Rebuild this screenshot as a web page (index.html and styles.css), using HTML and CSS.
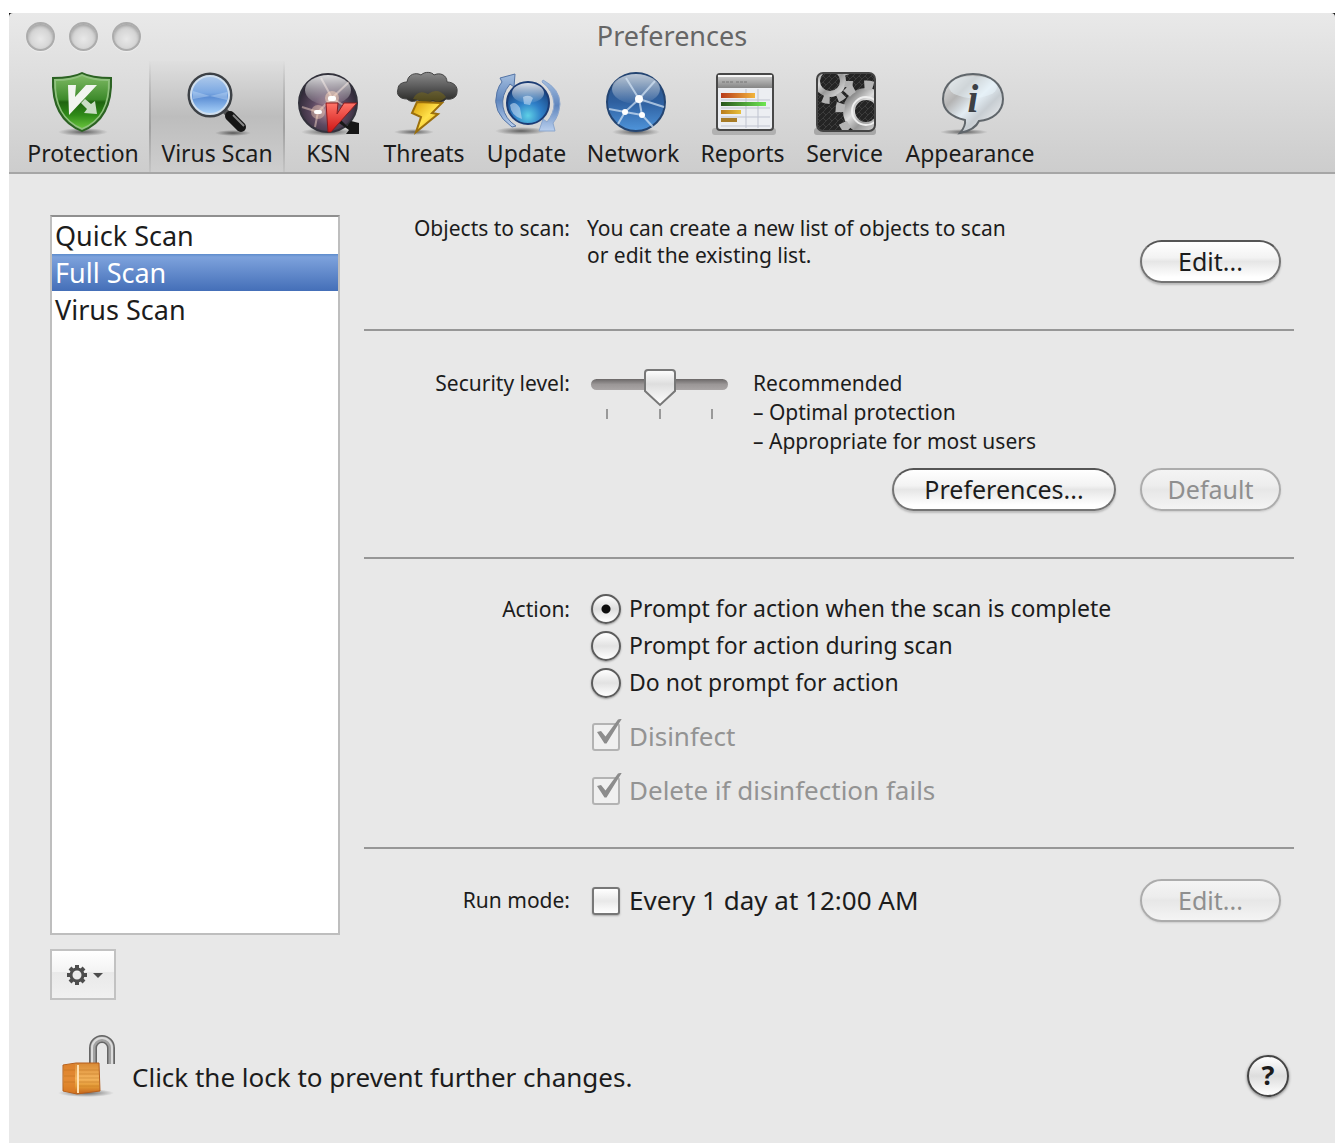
FILE: index.html
```html
<!DOCTYPE html>
<html lang="en">
<head>
<meta charset="utf-8">
<title>Preferences</title>
<link rel="stylesheet" href="styles.css">
</head>
<body>
<div class="window">
  <header class="header">
    <div class="titlebar">
      <div class="lights">
        <button class="light" type="button" aria-label="Close"></button>
        <button class="light" type="button" aria-label="Minimize"></button>
        <button class="light" type="button" aria-label="Zoom"></button>
      </div>
      <h1 class="title">Preferences</h1>
    </div>
    <nav class="toolbar">
      <button class="tool" type="button">
        <svg class="tool-icon" viewBox="0 0 68 68" aria-hidden="true">
          <defs>
            <radialGradient id="shade"><stop offset="0" stop-color="#000" stop-opacity=".55"/><stop offset="1" stop-color="#000" stop-opacity="0"/></radialGradient>
            <linearGradient id="shield" x1="0" y1="0" x2="0" y2="1"><stop offset="0" stop-color="#7cb862"/><stop offset=".45" stop-color="#3d8a2b"/><stop offset=".5" stop-color="#1f6410"/><stop offset=".75" stop-color="#2f8a18"/><stop offset="1" stop-color="#67c23c"/></linearGradient>
          </defs>
          <ellipse cx="34" cy="62" rx="25" ry="4" fill="url(#shade)"/>
          <path d="M33 2Q42 7 63 7Q65 50 33 62Q1 50 3 7Q24 7 33 2Z" fill="#2b6222"/>
          <path d="M33 4Q43 9 61 9Q62 48 33 60Q4 48 5 9Q23 9 33 4Z" fill="#8fc27d"/>
          <path d="M33 6Q43 11 59 11Q60 47 33 58Q6 47 7 11Q23 11 33 6Z" fill="url(#shield)"/>
          <path d="M19 15H27L26 27L37 15H48L20 45Z" fill="#f2f5f0"/>
          <path d="M36 29L42 34L46 31L48 44L35 43L38 39L32 33Z" fill="#c9dcc4"/>
        </svg>
        <span>Protection</span>
      </button>
      <button class="tool tool-active" type="button" aria-current="page">
        <svg class="tool-icon" viewBox="0 0 68 68" aria-hidden="true">
          <defs><linearGradient id="lens" x1="0" y1="0" x2="0" y2="1"><stop offset="0" stop-color="#b4cdec"/><stop offset=".45" stop-color="#7ba8e2"/><stop offset=".55" stop-color="#5c8ed4"/><stop offset="1" stop-color="#b5dcff"/></linearGradient></defs>
          <ellipse cx="50" cy="63" rx="18" ry="3" fill="url(#shade)"/>
          <path d="M42 41L47 46" stroke="#555" stroke-width="6"/>
          <path d="M47 46L58 57" stroke="#161616" stroke-width="10" stroke-linecap="round"/>
          <path d="M50 45L61 56" stroke="#888" stroke-width="2"/>
          <circle cx="27" cy="25" r="21" fill="url(#lens)" stroke="#3d4146" stroke-width="3"/>
          <circle cx="27" cy="25" r="19" fill="none" stroke="#cfdeee" stroke-width="2"/>
          <path d="M27 26L10 21V29ZM27 26L44 22V30Z" fill="#d5e7fb" opacity=".35"/>
        </svg>
        <span>Virus Scan</span>
      </button>
      <button class="tool" type="button">
        <svg class="tool-icon" viewBox="0 0 68 68" aria-hidden="true">
          <defs>
            <radialGradient id="dark" cx=".5" cy=".62" r=".6"><stop offset="0" stop-color="#b28b9b"/><stop offset=".45" stop-color="#5e4a62"/><stop offset="1" stop-color="#25222e"/></radialGradient>
            <linearGradient id="gloss" x1="0" y1="0" x2="0" y2="1"><stop offset="0" stop-color="#fff" stop-opacity=".85"/><stop offset="1" stop-color="#fff" stop-opacity=".05"/></linearGradient>
            <linearGradient id="red" x1="0" y1="0" x2="0" y2="1"><stop offset="0" stop-color="#ff7468"/><stop offset="1" stop-color="#cf1616"/></linearGradient>
          </defs>
          <ellipse cx="33" cy="62" rx="27" ry="4" fill="url(#shade)"/>
          <circle cx="33" cy="33" r="29" fill="url(#dark)" stroke="#33323c" stroke-width="2"/>
          <path d="M37 28L26 8M37 28L54 12M37 28L23 42L7 37M37 28L56 40M23 42L20 57" stroke="#f1d3c6" stroke-width="2" fill="none" opacity=".5"/>
          <ellipse cx="33" cy="20" rx="23" ry="15" fill="url(#gloss)"/>
          <circle cx="37" cy="28" r="7" fill="#ffd9bd" opacity=".5"/>
          <circle cx="23" cy="42" r="7" fill="#ffd9bd" opacity=".4"/>
          <rect x="33" y="26" width="8" height="5" rx="2" fill="#fff"/>
          <rect x="19" y="40" width="8" height="4" rx="2" fill="#fff"/>
          <path d="M46 50L52 56L56 51L64 53V64H51L54 60L44 53Z" fill="#171717"/>
          <path d="M31 33H43L42 44L49 33H62L36 62L33 62Z" fill="url(#red)" stroke="#8b1a1d"/>
        </svg>
        <span>KSN</span>
      </button>
      <button class="tool" type="button">
        <svg class="tool-icon" viewBox="0 0 68 68" aria-hidden="true">
          <defs>
            <linearGradient id="cloud" x1="0" y1="0" x2="0" y2="1"><stop offset="0" stop-color="#8b8b8b"/><stop offset=".5" stop-color="#575757"/><stop offset="1" stop-color="#242420"/></linearGradient>
            <linearGradient id="bolt" x1="0" y1="0" x2="1" y2="1"><stop offset="0" stop-color="#d79a06"/><stop offset=".5" stop-color="#ffe14a"/><stop offset="1" stop-color="#e09b0c"/></linearGradient>
          </defs>
          <ellipse cx="24" cy="62" rx="20" ry="3" fill="url(#shade)"/>
          <path d="M17 29C9 29 6 24 8 19C8 14 13 12 17 12C18 4 26 2 31 5C35 1 42 2 44 5C50 2 57 5 57 12C64 12 68 17 67 22C67 28 61 30 56 29C52 34 46 33 43 31C36 35 31 33 28 30C24 32 20 32 17 29Z" fill="url(#cloud)" stroke="#444"/>
          <path d="M23 29Q28 19 38 24Q48 17 56 27Q49 34 43 30Q35 34 28 30Z" fill="#8a760e" opacity=".4"/>
          <path d="M27 32L52 33L42 43L48 44L26 62L31 47L22 43Z" fill="url(#bolt)" stroke="#9b6f0c" stroke-width="2"/>
        </svg>
        <span>Threats</span>
      </button>
      <button class="tool" type="button">
        <svg class="tool-icon" viewBox="0 0 68 68" aria-hidden="true">
          <defs>
            <radialGradient id="globe" cx=".5" cy=".8" r=".8"><stop offset="0" stop-color="#5ed0e6"/><stop offset=".4" stop-color="#2f7fc8"/><stop offset="1" stop-color="#16366e"/></radialGradient>
            <linearGradient id="arrow" x1="0" y1="0" x2="0" y2="1"><stop offset="0" stop-color="#a4bedf"/><stop offset=".5" stop-color="#5f86be"/><stop offset="1" stop-color="#b9cfee"/></linearGradient>
          </defs>
          <ellipse cx="28" cy="61" rx="26" ry="4" fill="url(#shade)"/>
          <path d="M19 57Q-2 42 4 22Q6 15 9 12L7 8L22 4L21 17L17 14Q8 25 10 37Q12 49 23 56Z" fill="url(#arrow)" stroke="#5474a5"/>
          <path d="M50 10Q67 19 67 34Q66 46 60 53L62 61L46 61L50 49L54 52Q61 43 61 34Q60 20 49 12Z" fill="url(#arrow)" stroke="#8ba6cd"/>
          <circle cx="35" cy="33" r="21" fill="url(#globe)" stroke="#1c3c74" stroke-width="2"/>
          <path d="M17 35Q22 30 27 38L29 49Q18 46 17 35ZM30 27Q36 24 40 28L37 35L31 34Z" fill="#c3dbf2" opacity=".6"/>
          <ellipse cx="35" cy="23" rx="16" ry="10" fill="url(#gloss)"/>
        </svg>
        <span>Update</span>
      </button>
      <button class="tool" type="button">
        <svg class="tool-icon" viewBox="0 0 68 68" aria-hidden="true">
          <defs><linearGradient id="net" x1="0" y1="0" x2="0" y2="1"><stop offset="0" stop-color="#2d527f"/><stop offset=".5" stop-color="#2e5f9f"/><stop offset="1" stop-color="#4f95db"/></linearGradient></defs>
          <ellipse cx="37" cy="62" rx="24" ry="4" fill="url(#shade)"/>
          <circle cx="37" cy="32" r="29" fill="url(#net)" stroke="#244572" stroke-width="2"/>
          <ellipse cx="37" cy="19" rx="24" ry="15" fill="url(#gloss)" opacity=".8"/>
          <path d="M40 29L27 8M40 29L56 11M40 29L65 37M40 29L26 42L10 39M26 42L43 45L40 29M43 45L54 57M26 42L19 54" stroke="#d6e6f5" stroke-width="2" fill="none" opacity=".7"/>
          <circle cx="40" cy="29" r="4" fill="#fff"/><circle cx="26" cy="42" r="3" fill="#fff"/><circle cx="43" cy="45" r="3" fill="#fff"/>
        </svg>
        <span>Network</span>
      </button>
      <button class="tool" type="button">
        <svg class="tool-icon" viewBox="0 0 68 68" aria-hidden="true">
          <defs>
            <linearGradient id="head" x1="0" y1="0" x2="0" y2="1"><stop offset="0" stop-color="#c4c4c4"/><stop offset="1" stop-color="#858585"/></linearGradient>
            <linearGradient id="bar1"><stop offset="0" stop-color="#b83c1c"/><stop offset="1" stop-color="#f2b53c"/></linearGradient>
            <linearGradient id="bar2"><stop offset="0" stop-color="#28551b"/><stop offset="1" stop-color="#6ee652"/></linearGradient>
            <linearGradient id="bar3"><stop offset="0" stop-color="#b97b1b"/><stop offset="1" stop-color="#e8c03c"/></linearGradient>
          </defs>
          <rect x="3" y="58" width="64" height="7" rx="3" fill="#999" opacity=".6"/>
          <rect x="8" y="4" width="56" height="56" rx="3" fill="#eceef2" stroke="#484848" stroke-width="2"/>
          <rect x="9" y="7" width="54" height="11" fill="url(#head)"/>
          <path d="M9 6H63" stroke="#f6f6f6" stroke-width="2"/>
          <path d="M13 12H24M27 12H38" stroke="#777" stroke-dasharray="3 1"/>
          <path d="M37 19V58M49 19V58M12 30H61M12 38H61M12 47H61M12 56H61" stroke="#bfc3cf"/>
          <path d="M12 23H46V28H12Z" fill="url(#bar1)"/><path d="M12 32H57V36H12Z" fill="url(#bar2)"/><path d="M12 40H32V44H12Z" fill="url(#bar3)"/><path d="M12 48H28V52H12Z" fill="#a87c27"/>
        </svg>
        <span>Reports</span>
      </button>
      <button class="tool" type="button">
        <svg class="tool-icon" viewBox="0 0 68 68" aria-hidden="true">
          <defs>
            <linearGradient id="steel" x1="0" y1="0" x2="1" y2="1"><stop offset="0" stop-color="#777"/><stop offset=".35" stop-color="#ddd"/><stop offset=".6" stop-color="#999"/><stop offset="1" stop-color="#ddd"/></linearGradient>
            <pattern id="mesh" width="6" height="6" patternUnits="userSpaceOnUse"><rect width="6" height="6" fill="#242424"/><path d="M0 0L3 3L6 0M0 6L3 3" stroke="#3c3c3c" fill="none"/></pattern>
            <clipPath id="plate"><rect x="6" y="3" width="58" height="58" rx="6"/></clipPath>
          </defs>
          <rect x="3" y="58" width="62" height="7" rx="3" fill="#888" opacity=".6"/>
          <rect x="6" y="3" width="58" height="58" rx="6" fill="url(#mesh)"/>
          <g clip-path="url(#plate)">
            <circle cx="19" cy="11" r="13" fill="none" stroke="url(#steel)" stroke-width="6"/>
            <circle cx="19" cy="11" r="19" fill="none" stroke="#b0b0b0" stroke-width="8" stroke-dasharray="7 8"/>
            <circle cx="55" cy="41" r="17" fill="none" stroke="url(#steel)" stroke-width="12"/>
            <circle cx="55" cy="41" r="26" fill="none" stroke="#b5b5b5" stroke-width="9" stroke-dasharray="9 11"/>
            <circle cx="55" cy="41" r="14" fill="none" stroke="#eee" stroke-width="2"/>
          </g>
          <rect x="6" y="3" width="58" height="58" rx="6" fill="none" stroke="#444" stroke-width="2"/>
        </svg>
        <span>Service</span>
      </button>
      <button class="tool" type="button">
        <svg class="tool-icon" viewBox="0 0 68 68" aria-hidden="true">
          <defs><linearGradient id="bubble" x1="0" y1="0" x2="1" y2="1"><stop offset="0" stop-color="#eee"/><stop offset=".3" stop-color="#b4b4b4"/><stop offset=".5" stop-color="#e3edf4"/><stop offset=".65" stop-color="#c7cdd2"/><stop offset="1" stop-color="#fff"/></linearGradient></defs>
          <ellipse cx="28" cy="62" rx="24" ry="3" fill="url(#shade)"/>
          <path d="M37 4C54 4 67 14 67 29C67 42 56 50 43 51Q39 60 24 63Q30 56 29 50C16 47 7 40 7 29C7 14 20 4 37 4Z" fill="url(#bubble)" stroke="#60666b" stroke-width="2"/>
          <ellipse cx="37" cy="17" rx="24" ry="11" fill="#eaf6fb" opacity=".5"/>
          <text class="info-letter" x="37" y="42" text-anchor="middle">i</text>
        </svg>
        <span>Appearance</span>
      </button>
    </nav>
  </header>

  <main class="content">
    <ul class="scan-list">
      <li><button class="scan" type="button">Quick Scan</button></li>
      <li><button class="scan scan-selected" type="button" aria-current="true">Full Scan</button></li>
      <li><button class="scan" type="button">Virus Scan</button></li>
    </ul>

    <form class="settings">
      <section class="row row-objects">
        <h2 class="label">Objects to scan:</h2>
        <p class="hint">You can create a new list of objects to scan<br>or edit the existing list.</p>
        <button class="push" type="button">Edit...</button>
      </section>

      <section class="row row-security">
        <label class="label" for="level">Security level:</label>
        <div class="level">
          <div class="slider">
            <input class="range" id="level" type="range" min="0" max="2" value="1">
            <div class="ticks"><i></i><i></i><i></i></div>
          </div>
          <p class="level-text">Recommended<br>– Optimal protection<br>– Appropriate for most users</p>
        </div>
        <div class="level-buttons">
          <button class="push push-wide" type="button">Preferences...</button>
          <button class="push" type="button" disabled>Default</button>
        </div>
      </section>

      <section class="row row-action">
        <h2 class="label">Action:</h2>
        <div class="options">
          <label class="option"><input class="radio" type="radio" name="action" checked>Prompt for action when the scan is complete</label>
          <label class="option"><input class="radio" type="radio" name="action">Prompt for action during scan</label>
          <label class="option"><input class="radio" type="radio" name="action">Do not prompt for action</label>
          <label class="option option-check option-off"><input class="check" type="checkbox" checked disabled>Disinfect</label>
          <label class="option option-check option-off"><input class="check" type="checkbox" checked disabled>Delete if disinfection fails</label>
        </div>
      </section>

      <section class="row row-mode">
        <h2 class="label">Run mode:</h2>
        <label class="option option-large"><input class="check" type="checkbox">Every 1 day at 12:00 AM</label>
        <button class="push" type="button" disabled>Edit...</button>
      </section>
    </form>

    <button class="gear" type="button" aria-label="Scan options">
      <svg width="36" height="22" viewBox="0 0 36 22" aria-hidden="true">
        <circle cx="12" cy="11" r="6" fill="none" stroke="#4d4d4d" stroke-width="3"/>
        <path d="M12 1V5M12 17V21M2 11H6M18 11H22M5 4L8 7M16 15L19 18M19 4L16 7M8 15L5 18" stroke="#4d4d4d" stroke-width="4"/>
        <path d="M28 9H38L33 14Z" fill="#4d4d4d"/>
      </svg>
    </button>
  </main>

  <footer class="footer">
    <button class="lock" type="button" aria-label="Lock">
      <svg width="54" height="62" viewBox="0 0 54 62" aria-hidden="true">
        <defs>
          <linearGradient id="brass" x1="0" y1="0" x2="0" y2="1"><stop offset="0" stop-color="#d98a35"/><stop offset=".5" stop-color="#f3b35c"/><stop offset=".75" stop-color="#e39a35"/><stop offset="1" stop-color="#c4641c"/></linearGradient>
        </defs>
        <ellipse cx="24" cy="58" rx="28" ry="4" fill="url(#shade)"/>
        <path d="M31 30V13A9 9 0 0 1 49 13V29" fill="none" stroke="#666" stroke-width="8"/>
        <path d="M31 30V13A9 9 0 0 1 49 13V29" fill="none" stroke="#a2a2a2" stroke-width="5"/>
        <path d="M30 30V13A10 10 0 0 1 50 13V29" fill="none" stroke="#dcdcdc" stroke-width="2"/>
        <path d="M1 30L14 28H37L38 56L15 59L1 56Z" fill="url(#brass)" stroke="#b55f1d"/>
        <path d="M2 30L13 29V58L2 56Z" fill="#dd7b25" opacity=".7"/>
        <path d="M16 30V58" stroke="#ffe0b0" stroke-width="2"/>
        <path d="M17 35H37M17 39H37M17 43H37M17 47H37M17 51H37M2 35H13M2 41H13M2 47H13" stroke="#b96f1c" opacity=".45"/>
      </svg>
    </button>
    <p class="lock-text">Click the lock to prevent further changes.</p>
    <button class="help" type="button" aria-label="Help">?</button>
  </footer>
</div>
</body>
</html>
```
FILE: styles.css
```css
* { box-sizing: border-box; }

body {
  margin: 0;
  padding: 13px 2px 5px 9px;
  min-height: 100vh;
  display: flex;
  background: #fff;
  color: #1c1c1c;
  font-family: "Noto Sans", "Open Sans", sans-serif;
  font-size: 21px;
  line-height: 27px;
}

h1, h2, p, ul { margin: 0; padding: 0; font-weight: 400; font-size: inherit; }
button { font-family: inherit; color: inherit; padding: 0; border: 0; background: none; }
input { margin: 0; }

.window {
  flex: 1;
  display: flex;
  flex-direction: column;
  background: linear-gradient(#111 0 20px, #e8e8e8 20px);
}

/* Title bar and toolbar */
.header {
  background: linear-gradient(#e9e9e9, #cdcdcd);
  border-bottom: 2px solid #a6a6a6;
  border-radius: 4px 4px 0 0;
}
.titlebar {
  height: 48px;
  padding: 0 17px 2px;
  display: grid;
  grid-template-columns: 1fr auto 1fr;
  align-items: center;
}
.lights { display: flex; gap: 14px; }
.light {
  width: 29px;
  height: 29px;
  border-radius: 50%;
  border: 2px solid #acacac;
  background: radial-gradient(circle at 50% 60%, #e8e8e8, #cdcdcd 75%);
  box-shadow: inset 0 2px 3px #a4a4a4, 0 1px 1px #eee;
}
.title { font-size: 27px; line-height: 34px; color: #666; }

.toolbar {
  padding-left: 8px;
  display: grid;
  grid-template-columns: 132px 136px 87px 104px 101px 112px 107px 97px 154px;
}
.tool {
  display: flex;
  flex-direction: column;
  align-items: center;
  padding: 9px 0 4px;
  font-size: 23px;
  line-height: 30px;
  white-space: nowrap;
}
.tool-active {
  background:
    linear-gradient(#0000, #a0a0a0 60%, #c4c4c4) left / 2px 100% no-repeat,
    linear-gradient(#0000, #a0a0a0 60%, #c4c4c4) right / 2px 100% no-repeat,
    linear-gradient(#dfdfdf, #bdbdbd 50%, #cecece);
}
.tool-icon { width: 68px; height: 68px; overflow: visible; }
.info-letter { font: italic bold 39px "Liberation Serif", serif; fill: #3c4045; }

/* List and settings */
.content {
  padding: 41px 41px 0;
  display: grid;
  grid-template-columns: 290px 1fr;
  column-gap: 24px;
  row-gap: 14px;
  background: #e8e8e8;
}
.scan-list {
  list-style: none;
  background: #fff;
  border: 2px solid #bebebe;
  border-top-color: #8f8f8f;
}
.scan {
  display: block;
  width: 100%;
  padding: 0 3px;
  text-align: left;
  font-size: 27px;
  line-height: 37px;
}
.scan-selected {
  color: #fff;
  background: linear-gradient(#5d8ccc, #7da2dc 8%, #446fb8);
}

.row {
  display: grid;
  grid-template-columns: 206px 1fr auto;
  column-gap: 17px;
  align-items: start;
  padding-right: 13px;
  border-bottom: 2px solid #979797;
}
.label { text-align: right; }

.row-objects { padding-bottom: 46px; }
.row-objects .push { margin-top: 25px; }

.row-security { padding-top: 38px; padding-bottom: 46px; }
.row-security .label { line-height: 29px; }
.level { grid-column: 2 / 4; display: flex; gap: 25px; padding-left: 4px; }
.level-text { line-height: 29px; }
.level-buttons {
  grid-column: 1 / 4;
  justify-self: end;
  display: flex;
  gap: 24px;
  margin-top: 12px;
}

.row-action { padding-top: 31px; padding-bottom: 38px; }
.row-action .label { line-height: 39px; }

.row-mode {
  align-items: center;
  padding-top: 30px;
  padding-bottom: 13px;
  border-bottom: 0;
}

/* Push buttons */
.push {
  min-width: 141px;
  height: 43px;
  border: 2px solid #747474;
  border-top-color: #555;
  border-radius: 22px;
  background: linear-gradient(#fff, #f3f3f3 40%, #e6e6e6 50%, #fff 90%);
  box-shadow: 0 2px 2px #bbb;
  padding-bottom: 2px;
  font-size: 25px;
  line-height: 34px;
}
.push-wide { min-width: 224px; }
.push:disabled {
  color: #8f8f8f;
  border-color: #acacac;
  background: linear-gradient(#f4f4f4, #ededed 40%, #e7e7e7 50%, #f4f4f4);
  box-shadow: 0 1px 2px #ccc;
}

/* Slider */
.slider { width: 137px; }
.range {
  appearance: none;
  display: block;
  width: 100%;
  height: 30px;
  background: none;
}
.range::-webkit-slider-runnable-track {
  height: 11px;
  border-radius: 6px;
  background: linear-gradient(#6b6868, #9b9797 50%, #a9a5a5);
}
.range::-webkit-slider-thumb {
  appearance: none;
  width: 32px;
  height: 38px;
  margin-top: -10px;
  background: url("data:image/svg+xml,%3Csvg xmlns='http://www.w3.org/2000/svg' viewBox='0 0 32 38'%3E%3Cdefs%3E%3ClinearGradient id='g' x1='0' y1='0' x2='0' y2='1'%3E%3Cstop stop-color='%23fff'/%3E%3Cstop offset='.4' stop-color='%23dedede'/%3E%3Cstop offset='1' stop-color='%23fff'/%3E%3C/linearGradient%3E%3C/defs%3E%3Cpath d='M4 1H28Q31 1 31 4V22L16 36L1 22V4Q1 1 4 1Z' fill='url(%23g)' stroke='%23777' stroke-width='2'/%3E%3C/svg%3E") no-repeat;
}
.ticks { display: flex; justify-content: space-between; padding: 10px 15px 0; }
.ticks i { width: 2px; height: 10px; background: #999; }

/* Radios and check boxes */
.option {
  display: flex;
  align-items: center;
  gap: 8px;
  padding-left: 4px;
  font-size: 23px;
  line-height: 37px;
}
.option-check { margin-top: 17px; }
.option-check, .option-large { font-size: 26px; }
.option-off { color: #939393; }

.radio {
  appearance: none;
  width: 30px;
  height: 30px;
  border: 2px solid #5c5c5c;
  border-radius: 50%;
  background: linear-gradient(#fff, #e2e2e2 50%, #fff);
  box-shadow: 0 1px 2px #999;
}
.radio:checked { background: radial-gradient(circle, #0d0d0d 0 4px, #0000 5px), linear-gradient(#fff, #ddd 50%, #fff); }

.check {
  appearance: none;
  position: relative;
  width: 28px;
  height: 28px;
  margin: 0 1px;
  border: 2px solid #777;
  border-radius: 3px;
  background: linear-gradient(#fff, #e8e8e8 50%, #fff);
  box-shadow: 0 1px 2px #aaa;
}
.check:disabled { border-color: #b3b3b3; background: #f0f0f0; box-shadow: none; }
.check:checked::before {
  content: "";
  position: absolute;
  left: 3px;
  top: -6px;
  width: 25px;
  height: 25px;
  background: #8c8c8c;
  clip-path: polygon(0 54%, 16% 50%, 34% 72%, 84% 4%, 100% 0, 38% 100%, 30% 100%);
}

/* Below the list */
.gear {
  width: 66px;
  height: 51px;
  display: grid;
  place-items: center;
  border: 2px solid #c2c2c2;
  background: linear-gradient(#fff, #f3f3f3 45%, #e9e9e9 45%, #f0f0f0);
}
.gear svg { overflow: visible; }
.footer {
  flex: 1;
  display: flex;
  align-items: flex-start;
  padding: 35px 46px 40px 53px;
  background: #e8e8e8;
}
.lock svg { display: block; overflow: visible; }
.lock-text { flex: 1; margin: 23px 16px 0; font-size: 26px; line-height: 38px; }
.help {
  width: 42px;
  height: 42px;
  margin-top: 20px;
  border: 2px solid #444;
  border-radius: 50%;
  background: linear-gradient(#fff, #ddd 50%, #fff);
  box-shadow: 0 1px 3px #777;
  padding-bottom: 2px;
  font-size: 27px;
  font-weight: 700;
  line-height: 34px;
}
```
